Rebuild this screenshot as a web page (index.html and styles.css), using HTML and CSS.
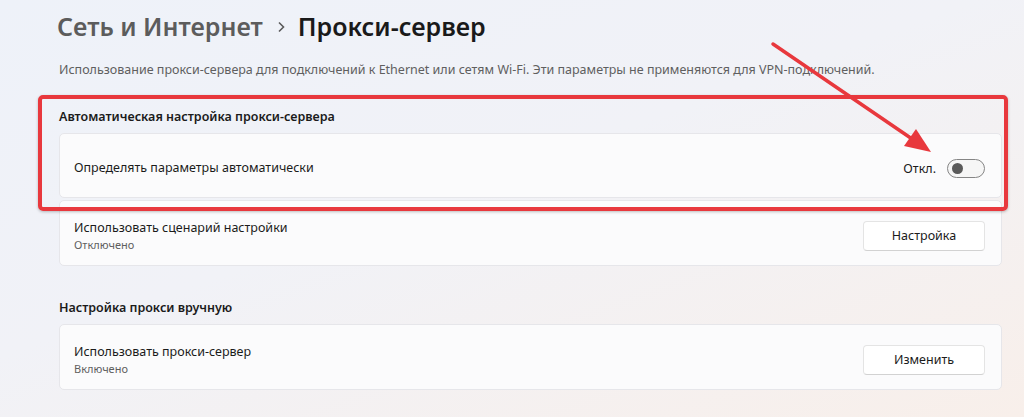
FILE: index.html
```html
<!DOCTYPE html>
<html lang="ru">
<head>
    <meta charset="UTF-8">
    <title>Прокси-сервер</title>
    <link rel="stylesheet" href="styles.css">
</head>
<body>
    <div class="page">
        <!-- Заголовок -->
        <h1 class="breadcrumb">
            <span class="crumb-parent">Сеть и Интернет</span>
            <svg class="crumb-sep" width="10" height="12" viewBox="0 0 10 12"><path d="M3 1.5 L7.5 6 L3 10.5" fill="none" stroke="#5a5a5a" stroke-width="1.6"/></svg>
            <span class="crumb-current">Прокси-сервер</span>
        </h1>
        <p class="desc">Использование прокси-сервера для подключений к Ethernet или сетям Wi-Fi. Эти параметры не применяются для VPN-подключений.</p>

        <!-- Автоматическая настройка -->
        <h2 class="section-title first">Автоматическая настройка прокси-сервера</h2>
        <div class="card card-single">
            <div class="card-label">Определять параметры автоматически</div>
            <div class="card-action">
                <span class="toggle-state">Откл.</span>
                <span class="toggle"><span class="knob"></span></span>
            </div>
        </div>
        <div class="card">
            <div class="card-text">
                <div class="card-label">Использовать сценарий настройки</div>
                <div class="card-sub">Отключено</div>
            </div>
            <button class="btn">Настройка</button>
        </div>

        <!-- Ручная настройка -->
        <h2 class="section-title">Настройка прокси вручную</h2>
        <div class="card">
            <div class="card-text">
                <div class="card-label">Использовать прокси-сервер</div>
                <div class="card-sub">Включено</div>
            </div>
            <button class="btn">Изменить</button>
        </div>

        <!-- Пометки поверх скриншота -->
        <div class="highlight"></div>
        <svg class="arrow" width="1024" height="417" viewBox="0 0 1024 417">
            <line x1="773" y1="44" x2="918" y2="143" stroke="#e8383d" stroke-width="3.5" stroke-linecap="round"/>
            <polygon points="931,152 904,146 916,129" fill="#e8383d"/>
        </svg>
    </div>
</body>
</html>
```

FILE: styles.css
```css
/* Общие стили */
html, body {
    margin: 0;
    height: 100%;
}

body {
    font-family: 'Noto Sans', 'Open Sans', sans-serif;
    color: #1b1b1b;
    background: linear-gradient(160deg, #eef2f9 0%, #f1f2f7 45%, #f8efea 100%);
    overflow: hidden;
}

.page {
    position: relative;
    width: 1024px;
    height: 417px;
    box-sizing: border-box;
    padding: 8px 22px 0 59px;
}

/* Заголовок */
.breadcrumb {
    display: flex;
    align-items: center;
    margin: 0;
    font-size: 25px;
    font-weight: 600;
    line-height: 36px;
    height: 36px;
}

.crumb-parent {
    color: #5c5c5c;
    margin-left: -2px;
}

.crumb-sep {
    margin: 2px 12px 0 13px;
}

.crumb-current {
    color: #1a1a1a;
}

.desc {
    margin: 17px 0 0 0;
    font-size: 12.5px;
    line-height: 18px;
    color: #5f5f5f;
}

/* Секции */
.section-title {
    margin: 33px 0 7px 0;
    font-size: 12.5px;
    font-weight: 600;
    line-height: 18px;
    color: #1b1b1b;
}

.section-title.first {
    margin-top: 29px;
}

/* Карточки */
.card {
    display: flex;
    align-items: center;
    justify-content: space-between;
    height: 66px;
    box-sizing: border-box;
    padding: 5px 16px 0 14px;
    margin-bottom: 2px;
    background: #fbfbfc;
    border: 1px solid #e6e6ea;
    border-radius: 5px;
}

.card-single {
    height: 65px;
}

.card-label {
    font-size: 12.5px;
    line-height: 18px;
    color: #1b1b1b;
}

.card-sub {
    font-size: 11px;
    line-height: 15px;
    color: #5f5f5f;
}

.card-action {
    display: flex;
    align-items: center;
    gap: 11px;
}

.toggle-state {
    font-size: 12.5px;
    color: #1b1b1b;
}

/* Переключатель */
.toggle {
    display: flex;
    align-items: center;
    width: 38px;
    height: 19px;
    box-sizing: border-box;
    border: 1px solid #858585;
    border-radius: 10px;
    background: #f6f6f6;
    padding-left: 4px;
}

.knob {
    width: 11px;
    height: 11px;
    border-radius: 50%;
    background: #5a5a5a;
}

/* Кнопки */
.btn {
    width: 122px;
    height: 30px;
    font-family: inherit;
    font-size: 12.5px;
    color: #1b1b1b;
    background: #ffffff;
    border: 1px solid #e4e4e4;
    border-bottom-color: #d2d2d2;
    border-radius: 4px;
}

/* Пометки */
.highlight {
    position: absolute;
    left: 38px;
    top: 95px;
    width: 970px;
    height: 116px;
    box-sizing: border-box;
    border: 4px solid #e8383d;
    border-radius: 5px;
    box-shadow: 0 1px 3px rgba(0, 0, 0, 0.25);
}

.arrow {
    position: absolute;
    left: 0;
    top: 0;
}
```
